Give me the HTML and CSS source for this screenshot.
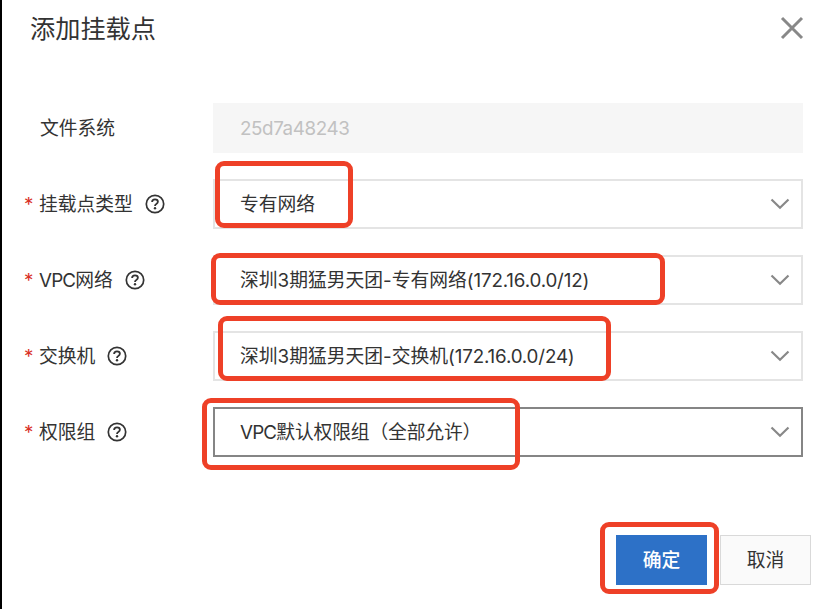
FILE: index.html
```html
<!DOCTYPE html>
<html lang="zh-CN">
<head>
    <meta charset="UTF-8">
    <meta name="viewport" content="width=device-width, initial-scale=1.0">
    <title>添加挂载点</title>
    <link rel="stylesheet" href="styles.css">
</head>
<body>

<svg class="sprite" aria-hidden="true">
    <symbol id="help" viewBox="0 0 20 20">
        <circle cx="10" cy="10" r="8.7" fill="none" stroke="currentColor" stroke-width="1.7"/>
        <path d="M7.1 8.1C7.1 6.3 8.3 5.4 10 5.4s2.9.9 2.9 2.4c0 1.2-.7 1.7-1.6 2.3-.8.5-1.3.9-1.3 2" fill="none" stroke="currentColor" stroke-width="1.8"/>
        <circle cx="10" cy="14.3" r="1.2" fill="currentColor"/>
    </symbol>
    <symbol id="arrow" viewBox="0 0 20 12">
        <path d="M1.5 1.5L10 9.7l8.5-8.2" fill="none" stroke="currentColor" stroke-width="2.2"/>
    </symbol>
</svg>

<div class="dialog">
    <div class="dialog-header">
        <h1>添加挂载点</h1>
        <button class="close" type="button" aria-label="关闭">
            <svg width="24" height="24" viewBox="0 0 24 24"><path d="M2 2l20 20M22 2L2 22" fill="none" stroke="currentColor" stroke-width="3"/></svg>
        </button>
    </div>

    <form class="form">
        <div class="row">
            <div class="label label-plain"><span class="name">文件系统</span></div>
            <div class="field disabled"><span class="value value-id">25d7a48243</span></div>
        </div>
        <div class="row">
            <div class="label"><span class="star">*</span><span class="name">挂载点类型</span><svg class="help"><use href="#help"/></svg></div>
            <div class="field">
                <span class="value">专有网络</span>
                <svg class="arrow"><use href="#arrow"/></svg>
                <span class="mark mark-type"></span>
            </div>
        </div>
        <div class="row">
            <div class="label"><span class="star">*</span><span class="name"><span class="vpc">VPC</span>网络</span><svg class="help"><use href="#help"/></svg></div>
            <div class="field">
                <span class="value">深圳3期猛男天团-专有网络<span class="cidr">(172.16.0.0/12)</span></span>
                <svg class="arrow"><use href="#arrow"/></svg>
                <span class="mark mark-vpc"></span>
            </div>
        </div>
        <div class="row">
            <div class="label"><span class="star">*</span><span class="name">交换机</span><svg class="help"><use href="#help"/></svg></div>
            <div class="field">
                <span class="value">深圳3期猛男天团-交换机<span class="cidr">(172.16.0.0/24)</span></span>
                <svg class="arrow"><use href="#arrow"/></svg>
                <span class="mark mark-switch"></span>
            </div>
        </div>
        <div class="row">
            <div class="label"><span class="star">*</span><span class="name">权限组</span><svg class="help"><use href="#help"/></svg></div>
            <div class="field focus">
                <span class="value value-group"><span class="vpc">VPC</span>默认权限组（全部允许）</span>
                <svg class="arrow"><use href="#arrow"/></svg>
                <span class="mark mark-group"></span>
            </div>
        </div>
    </form>

    <div class="dialog-footer">
        <button class="btn primary" type="button">确定<span class="mark mark-ok"></span></button>
        <button class="btn" type="button">取消</button>
    </div>
</div>

</body>
</html>
```
FILE: styles.css
```css
* {
    box-sizing: border-box;
}

body {
    margin: 0;
    background-color: #fff;
    color: #333;
    font-family: Inter, "Noto Sans CJK SC", sans-serif;
    font-size: 18.8px;
    overflow: hidden;
}

.sprite {
    display: none;
}

.dialog {
    height: 609px;
    border-left: 2px solid #000;
}

.dialog-header {
    display: flex;
    justify-content: space-between;
    align-items: center;
    height: 56px;
    padding: 0 27px 0 28px;
}

h1 {
    margin: 0;
    padding-bottom: 3px;
    font-size: 25.2px;
    font-weight: normal;
}

.close {
    display: flex;
    padding: 0;
    border: none;
    background: none;
    color: #888;
}

.form {
    display: flex;
    flex-direction: column;
    gap: 26px;
    padding: 47px 28px 0 22px;
}

.row {
    display: flex;
    height: 50.1px;
}

.label {
    display: flex;
    align-items: center;
    width: 189px;
}

.label-plain {
    padding-left: 16px;
}

.name,
.value {
    padding-bottom: 3px;
}

.star {
    width: 15px;
    color: #d93026;
}

.help {
    width: 20px;
    height: 20px;
    margin-left: 12px;
}

.vpc {
    letter-spacing: -0.8px;
}

.cidr {
    letter-spacing: -0.17px;
}

.value-id {
    padding-bottom: 0;
    letter-spacing: -0.4px;
}

.value-group {
    letter-spacing: -0.15px;
}

.field {
    position: relative;
    display: flex;
    flex: 1;
    justify-content: space-between;
    align-items: center;
    padding: 0 11px 0 25px;
    border: 2px solid #e4e4e4;
    white-space: nowrap;
}

.disabled {
    border-color: #f6f6f6;
    background-color: #f6f6f6;
    color: #c1c1c1;
}

.focus {
    border-color: #858585;
}

.arrow {
    width: 20px;
    height: 12px;
    margin-bottom: 1px;
    color: #888;
}

.btn {
    position: relative;
    width: 91px;
    height: 50px;
    padding: 0 0 3px;
    border: 1px solid #d9d9d9;
    background-color: #fafafa;
    color: #333;
    font: inherit;
}

.primary {
    border-color: #2d71c7;
    background-color: #2d71c7;
    color: #fff;
    font-weight: 500;
}

.dialog-footer {
    display: flex;
    justify-content: flex-end;
    gap: 13px;
    padding: 78px 20px 0 0;
}

/* red highlight frames over the controls */
.mark {
    position: absolute;
    border: 5px solid #ee4027;
    border-radius: 9px;
    pointer-events: none;
}

.mark-type {
    top: -20px;
    left: 0;
    width: 138px;
    height: 67px;
}

.mark-vpc {
    top: -4px;
    left: -4px;
    width: 454px;
    height: 52px;
}

.mark-switch {
    top: -17px;
    left: 3px;
    width: 393px;
    height: 65px;
}

.mark-group {
    top: -11px;
    left: -13px;
    width: 318px;
    height: 72px;
}

.mark-ok {
    top: -14px;
    left: -17px;
    width: 119px;
    height: 72px;
}
```
